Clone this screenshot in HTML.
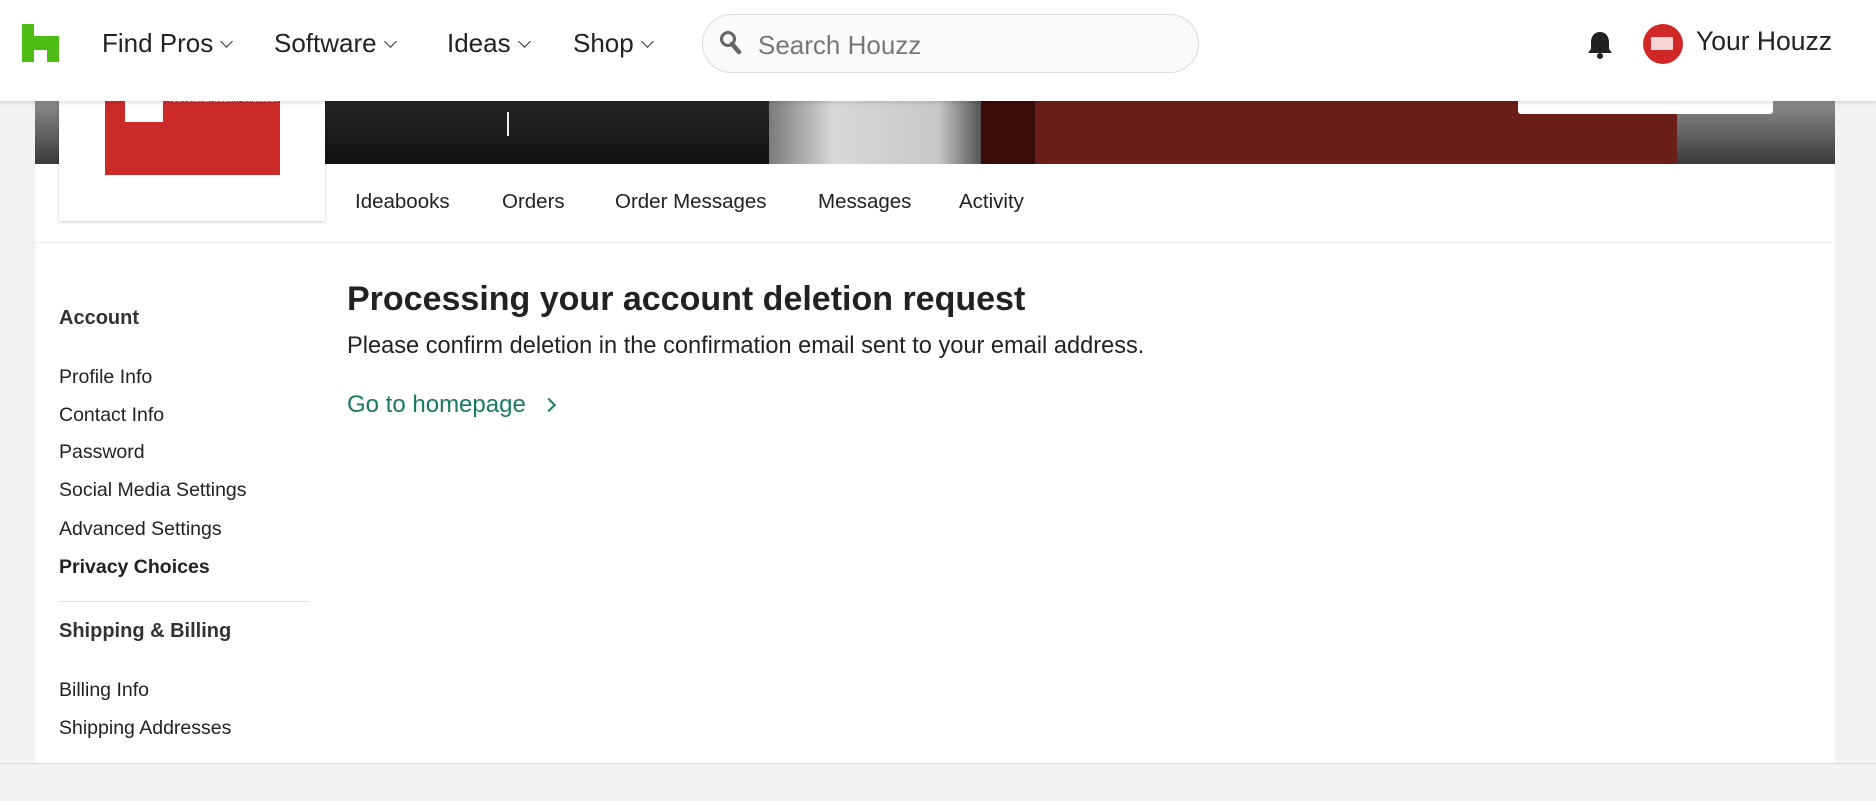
<!DOCTYPE html>
<html><head><meta charset="utf-8"><style>
*{margin:0;padding:0;box-sizing:border-box}
body{width:1876px;height:801px;background:#f2f2f2;font-family:"Liberation Sans",sans-serif;color:#222;position:relative;overflow:hidden}
.abs{position:absolute;white-space:nowrap}
#hdr{position:absolute;left:0;top:0;width:1876px;height:101px;background:#fff;box-shadow:0 2px 4px rgba(0,0,0,.12);z-index:5}
.nav{font-size:26px;color:#222;top:28px}
.chev{display:inline-block;width:9px;height:9px;border-right:1.6px solid #333;border-bottom:1.6px solid #333;transform:rotate(45deg);margin-left:9px;position:relative;top:-6px}
#main{position:absolute;left:35px;top:100px;width:1800px;height:663px;background:#fff}
.side{font-size:19.5px;color:#222;left:59px}
.tab{font-size:20.5px;color:#222;top:190px}
</style></head><body>
<div class="abs" style="left:0;top:763px;width:1876px;height:1px;background:#d8d8d8"></div>
<div id="main"></div>
<!-- banner -->
<div class="abs" style="left:35px;top:90px;width:1800px;height:74px;background:linear-gradient(#9a9a9a,#3a3a3a)"></div>
<div class="abs" style="left:325px;top:90px;width:444px;height:74px;background:linear-gradient(#2a2a2a,#111)"></div>
<div class="abs" style="left:507px;top:112px;width:2px;height:24px;background:#eee"></div>
<div class="abs" style="left:769px;top:90px;width:212px;height:74px;background:linear-gradient(90deg,#7a7a7a,#d8d8d8 30%,#c8c8c8 80%,#555)"></div>
<div class="abs" style="left:981px;top:90px;width:54px;height:74px;background:#3a0c08"></div>
<div class="abs" style="left:1035px;top:90px;width:642px;height:74px;background:#6a1f18"></div>
<div class="abs" style="left:1518px;top:90px;width:255px;height:24px;background:#fff;border-radius:0 0 3px 3px"></div>
<!-- tab area -->
<div class="abs" style="left:35px;top:164px;width:1800px;height:79px;background:#fff;border-bottom:1px solid #ececec"></div>
<div class="abs" style="left:59px;top:90px;width:266px;height:131px;background:#fff;box-shadow:0 1px 3px rgba(0,0,0,.2)"></div>
<div class="abs" style="left:105px;top:90px;width:175px;height:85px;background:#cc2a29"></div>
<div class="abs" style="left:125px;top:90px;width:38px;height:32px;background:#fff"></div>
<div class="abs" style="left:168px;top:98px;font-size:6px;color:#fff">YOUR ONLINE ACCOUNT GUIDEBOOK</div>
<div class="abs tab" style="left:355px">Ideabooks</div>
<div class="abs tab" style="left:502px">Orders</div>
<div class="abs tab" style="left:615px">Order Messages</div>
<div class="abs tab" style="left:818px">Messages</div>
<div class="abs tab" style="left:959px">Activity</div>
<!-- sidebar -->
<div class="abs side" style="top:307px;font-size:20px;font-weight:bold;color:#333">Account</div>
<div class="abs side" style="top:366px">Profile Info</div>
<div class="abs side" style="top:404px">Contact Info</div>
<div class="abs side" style="top:441px">Password</div>
<div class="abs side" style="top:479px">Social Media Settings</div>
<div class="abs side" style="top:518px">Advanced Settings</div>
<div class="abs side" style="top:556px;font-weight:bold">Privacy Choices</div>
<div class="abs" style="left:59px;top:601px;width:250px;height:1px;background:#e2e2e2"></div>
<div class="abs side" style="top:620px;font-size:20px;font-weight:bold;color:#333">Shipping &amp; Billing</div>
<div class="abs side" style="top:679px">Billing Info</div>
<div class="abs side" style="top:717px">Shipping Addresses</div>
<!-- content -->
<div class="abs" style="left:347px;top:280px;font-size:34px;font-weight:bold;color:#222">Processing your account deletion request</div>
<div class="abs" style="left:347px;top:333px;font-size:23.6px;color:#222">Please confirm deletion in the confirmation email sent to your email address.</div>
<div class="abs" style="left:347px;top:391px;font-size:24px;color:#1a7a63">Go to homepage <span style="display:inline-block;width:10px;height:10px;border-right:2px solid #1a7a63;border-top:2px solid #1a7a63;transform:rotate(45deg);margin-left:12px;position:relative;top:-2px"></span></div>
<!-- header -->
<div id="hdr">
<svg class="abs" style="left:22px;top:24px" width="37" height="38" viewBox="0 0 37 38"><path d="M0 0H12V12H37V38H25V26H12V38H0Z" fill="#4dbc15"/></svg>
<div class="abs nav" style="left:102px">Find Pros<span class="chev"></span></div>
<div class="abs nav" style="left:274px">Software<span class="chev"></span></div>
<div class="abs nav" style="left:447px">Ideas<span class="chev"></span></div>
<div class="abs nav" style="left:573px">Shop<span class="chev"></span></div>
<div class="abs" style="left:702px;top:14px;width:497px;height:59px;border:1px solid #dcdcd6;border-radius:30px;background:#fafaf8"></div>
<svg class="abs" style="left:719px;top:30px" width="24" height="26" viewBox="0 0 24 26"><circle cx="9" cy="9" r="6.5" fill="none" stroke="#666" stroke-width="3"/><path d="M13 14L20 22" stroke="#666" stroke-width="4.5" stroke-linecap="round"/></svg>
<div class="abs" style="left:758px;top:30px;font-size:26px;color:#777">Search Houzz</div>
<svg class="abs" style="left:1586px;top:30px" width="28" height="30" viewBox="0 0 28 30"><path d="M14 2C8 2 5 7 5 12V19L2 23H26L23 19V12C23 7 20 2 14 2Z" fill="#222"/><circle cx="14" cy="26" r="3" fill="#222"/></svg>
<div class="abs" style="left:1643px;top:24px;width:40px;height:40px;border-radius:50%;background:#d02826"></div>
<div class="abs" style="left:1651px;top:37px;width:22px;height:13px;background:#fff;opacity:.8"></div>
<div class="abs" style="left:1696px;top:26px;font-size:26.5px;color:#222">Your Houzz</div>
</div>
</body></html>
